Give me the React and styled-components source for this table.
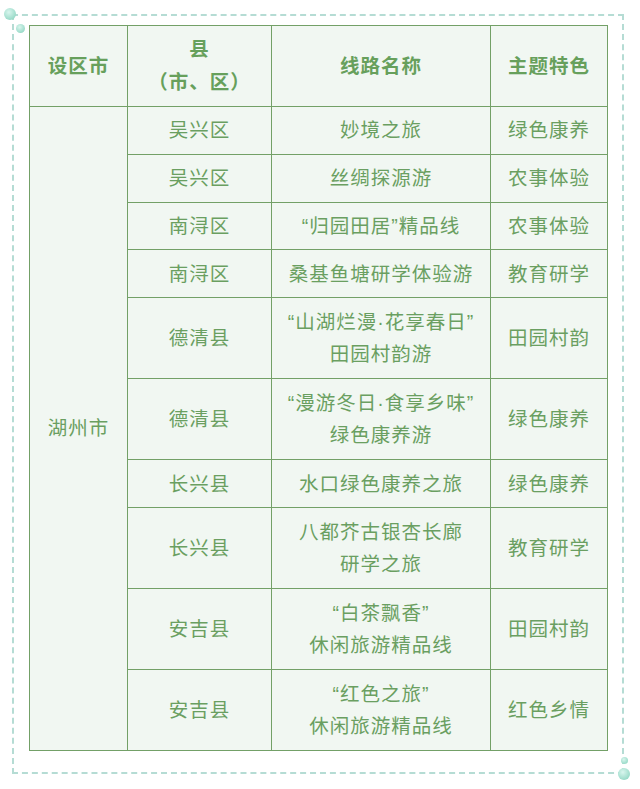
import React from "react";
import styled, { createGlobalStyle } from "styled-components";

const Global = createGlobalStyle`
  html, body { margin: 0; padding: 0; background: #fff; }
  body { font-family: "Liberation Sans", "Noto Sans CJK SC", sans-serif; }
`;

const Page = styled.div`
  width: 640px;
  height: 789px;
  padding: 14px 0 0 12px;
  box-sizing: border-box;
`;

const Frame = styled.div`
  position: relative;
  width: 612px;
  height: 760px;
  box-sizing: border-box;
  border: 2px dashed #b5dcd4;
  padding: 9px 15px 0 15px;
`;

const Dot = styled.span`
  position: absolute;
  width: ${(p) => p.size}px;
  height: ${(p) => p.size}px;
  border-radius: 50%;
  background: radial-gradient(circle at 40% 35%, #d9f6ee, #97d9c7 75%);
  ${(p) => p.pos}
`;

const Table = styled.table`
  border-collapse: collapse;
  width: 578px;
  table-layout: fixed;
  color: #6a9f61;
  font-family: "Liberation Sans", "Noto Sans CJK SC", sans-serif;
  font-size: 19.5px;
  letter-spacing: 1px;
  line-height: 32px;
`;

const Cell = styled.td`
  border: 1.5px solid #73a067;
  background: #f1f7f2;
  text-align: center;
  vertical-align: middle;
  padding: 0;
  white-space: nowrap;
  height: ${(p) => (p.tall ? 80 : 46.8)}px;
`;

const Head = styled(Cell).attrs({ as: "th" })`
  font-weight: 700;
  height: 80px;
  line-height: 33px;
  color: #67a05c;
`;

const rows = [
  ["吴兴区", ["妙境之旅"], "绿色康养"],
  ["吴兴区", ["丝绸探源游"], "农事体验"],
  ["南浔区", ["“归园田居”精品线"], "农事体验"],
  ["南浔区", ["桑基鱼塘研学体验游"], "教育研学"],
  ["德清县", ["“山湖烂漫·花享春日”", "田园村韵游"], "田园村韵"],
  ["德清县", ["“漫游冬日·食享乡味”", "绿色康养游"], "绿色康养"],
  ["长兴县", ["水口绿色康养之旅"], "绿色康养"],
  ["长兴县", ["八都芥古银杏长廊", "研学之旅"], "教育研学"],
  ["安吉县", ["“白茶飘香”", "休闲旅游精品线"], "田园村韵"],
  ["安吉县", ["“红色之旅”", "休闲旅游精品线"], "红色乡情"],
];

export default function App() {
  return (
    <Page>
      <Global />
      <Frame>
        <Dot size={12} pos="left: -10px; top: -8px;" />
        <Dot size={9} pos="left: 2px; top: 8px;" />
        <Dot size={7} pos="right: -6px; bottom: 8px;" />
        <Dot size={12} pos="right: -8px; bottom: -8px;" />
        <Table>
          <colgroup>
            <col style={{ width: 98 }} />
            <col style={{ width: 144 }} />
            <col style={{ width: 219 }} />
            <col style={{ width: 117 }} />
          </colgroup>
          <thead>
            <tr>
              <Head>设区市</Head>
              <Head>
                县<br />（市、区）
              </Head>
              <Head>线路名称</Head>
              <Head>主题特色</Head>
            </tr>
          </thead>
          <tbody>
            {rows.map((r, i) => {
              const tall = r[1].length > 1;
              return (
                <tr key={i}>
                  {i === 0 && <Cell rowSpan={rows.length}>湖州市</Cell>}
                  <Cell tall={tall}>{r[0]}</Cell>
                  <Cell tall={tall}>
                    {r[1].map((l, j) => (
                      <React.Fragment key={j}>
                        {j > 0 && <br />}
                        {l}
                      </React.Fragment>
                    ))}
                  </Cell>
                  <Cell tall={tall}>{r[2]}</Cell>
                </tr>
              );
            })}
          </tbody>
        </Table>
      </Frame>
    </Page>
  );
}
